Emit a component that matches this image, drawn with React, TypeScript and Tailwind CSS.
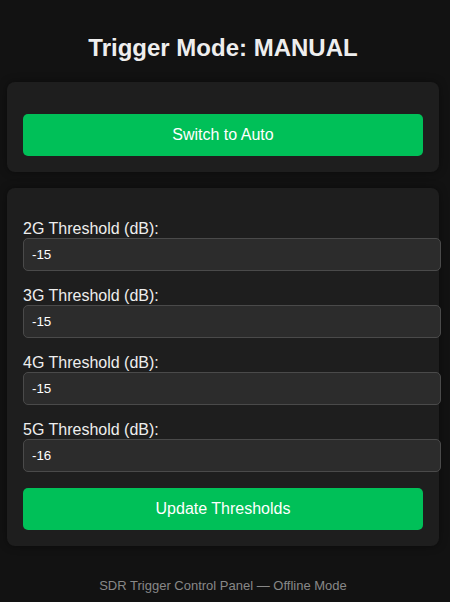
import { useState } from "react";

const bands = [
  { id: "2g", label: "2G Threshold (dB):", value: "-15" },
  { id: "3g", label: "3G Threshold (dB):", value: "-15" },
  { id: "4g", label: "4G Threshold (dB):", value: "-15" },
  { id: "5g", label: "5G Threshold (dB):", value: "-16" },
];

function App() {
  const [values, setValues] = useState(bands.map((b) => b.value));

  return (
    <div className="min-h-[602px] bg-[#121212] font-['Liberation_Sans',Arial,sans-serif] text-[#eeeeee]">
      <div className="ml-[7px] w-[432px] pt-[34px]">
        <h1 className="mb-[20px] text-center text-[24px] font-bold leading-[28px]">
          Trigger Mode: MANUAL
        </h1>

        <div className="rounded-[8px] bg-[#1e1e1e] p-[16px] pt-[32px] shadow-[0_0_8px_rgba(0,0,0,0.4)]">
          <button className="h-[42px] w-full rounded-[5px] bg-[#00c058] text-[16px] text-white">
            Switch to Auto
          </button>
        </div>

        <div className="mt-[16px] rounded-[8px] bg-[#1e1e1e] p-[16px] pt-[32px] shadow-[0_0_8px_rgba(0,0,0,0.4)]">
          {bands.map((band, i) => (
            <div key={band.id} className="mb-[16px]">
              <label className="block text-[16px] leading-[18px]">{band.label}</label>
              <input
                value={values[i]}
                onChange={(e) =>
                  setValues((prev) => prev.map((v, j) => (j === i ? e.target.value : v)))
                }
                className="box-content block h-[15px] w-full rounded-[5px] border border-[#4a4a4a] bg-[#2c2c2c] px-[8px] py-[8px] text-[13.33px] leading-[15px] text-white outline-none"
              />
            </div>
          ))}
          <button className="h-[42px] w-full rounded-[5px] bg-[#00c058] text-[16px] text-white">
            Update Thresholds
          </button>
        </div>

        <p className="mt-[30px] text-center text-[13px] text-[#888888]">
          SDR Trigger Control Panel — Offline Mode
        </p>
      </div>
    </div>
  );
}

export default App;
